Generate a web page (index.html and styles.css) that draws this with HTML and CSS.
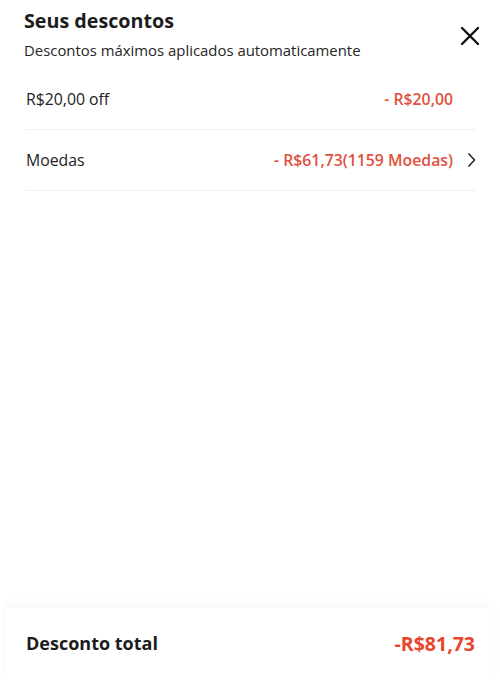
FILE: index.html
```html
<!DOCTYPE html>
<html lang="pt-BR">

<head>
  <meta charset="UTF-8">
  <meta name="viewport" content="width=device-width, initial-scale=1.0">
  <title>Seus descontos</title>
  <link rel="stylesheet" href="styles.css">
</head>

<body>
  <div class="sheet">
    <div class="header">
      <div class="titles">
        <h2>Seus descontos</h2>
        <p class="subtitle">Descontos máximos aplicados automaticamente</p>
      </div>
      <button class="close" aria-label="Fechar">
        <svg width="20" height="20" viewBox="0 0 20 20">
          <path d="M2 2 L18 18 M18 2 L2 18" stroke="#111" stroke-width="2.4" stroke-linecap="round" fill="none" />
        </svg>
      </button>
    </div>

    <div class="list">
      <div class="row">
        <span class="label">R$20,00 off</span>
        <span class="value">- R$20,00</span>
        <span class="chevron"></span>
      </div>
      <div class="row">
        <span class="label">Moedas</span>
        <span class="value">- R$61,73(1159 Moedas)</span>
        <span class="chevron">
          <svg width="9" height="16" viewBox="0 0 9 16">
            <path d="M1.5 1.5 L7.5 8 L1.5 14.5" stroke="#222" stroke-width="1.5" fill="none" stroke-linejoin="round" />
          </svg>
        </span>
      </div>
    </div>

    <div class="footer">
      <span class="total-label">Desconto total</span>
      <span class="total-value">-R$81,73</span>
    </div>
  </div>
</body>

</html>
```

FILE: styles.css
```css
body {
  margin: 0;
  font-family: "Open Sans", "Noto Sans", sans-serif;
  color: #222;
  background-color: #ffffff;
}

.sheet {
  height: 684px;
  display: flex;
  flex-direction: column;
}

.header {
  display: flex;
  justify-content: space-between;
  align-items: flex-start;
  padding: 7px 20px 0 24px;
}

h2 {
  margin: 0;
  font-size: 19.7px;
  line-height: 28px;
  font-weight: 700;
  color: #1c1c1c;
}

.subtitle {
  margin: 5px 0 0;
  font-size: 14.9px;
  line-height: 20px;
  color: #262626;
}

.close {
  background: none;
  border: none;
  padding: 0;
  margin-top: 19px;
  cursor: pointer;
}

.list {
  flex: 1;
  padding: 9px 24px 0 26px;
}

.row {
  display: flex;
  align-items: center;
  height: 60px;
  border-bottom: 1px solid #f0f0f0;
  font-size: 15.8px;
}

.label {
  flex: 1;
  color: #222;
}

.value {
  color: #e0513c;
  font-weight: 600;
}

.chevron {
  width: 23px;
  display: flex;
  justify-content: flex-end;
}

.footer {
  display: flex;
  justify-content: space-between;
  align-items: center;
  height: 70px;
  margin: 0 6px;
  padding: 0 19px 6px 20px;
  box-shadow: 0 -6px 8px rgba(0, 0, 0, 0.025);
}

.total-label {
  font-size: 18px;
  font-weight: 700;
  color: #1c1c1c;
}

.total-value {
  font-size: 19.5px;
  font-weight: 700;
  color: #e8452c;
}
```
